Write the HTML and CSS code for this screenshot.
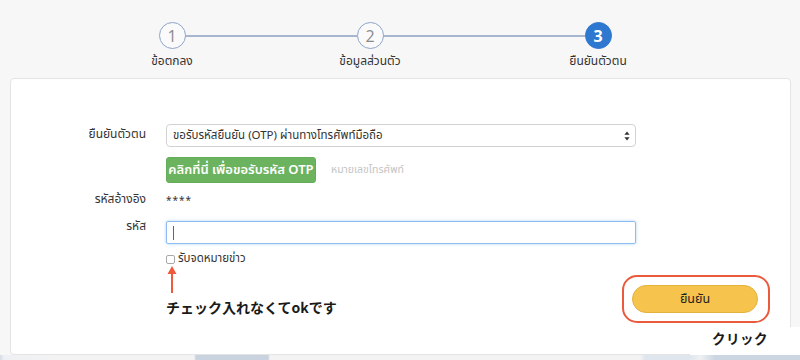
FILE: index.html
```html
<!DOCTYPE html>
<html lang="th">
<head>
<meta charset="utf-8">
<title>ยืนยันตัวตน</title>
<link rel="stylesheet" href="styles.css">
</head>
<body>
<div class="page">
  <div class="stepper">
    <div class="step">
      <div class="circle">1</div>
      <div class="step-label">ข้อตกลง</div>
    </div>
    <div class="connector c1"></div>
    <div class="step">
      <div class="circle">2</div>
      <div class="step-label">ข้อมูลส่วนตัว</div>
    </div>
    <div class="connector c2"></div>
    <div class="step">
      <div class="circle active">3</div>
      <div class="step-label">ยืนยันตัวตน</div>
    </div>
  </div>

  <div class="card">
    <div class="form-grid">
      <div class="label l-verify">ยืนยันตัวตน</div>
      <div class="control">
        <div class="select">
          <span>ขอรับรหัสยืนยัน (OTP) ผ่านทางโทรศัพท์มือถือ</span>
          <svg class="updown" width="6" height="10" viewBox="0 0 6 10"><path d="M3 0.5 L5.6 3.8 H0.4 Z M3 9.5 L5.6 6.2 H0.4 Z" fill="#333"/></svg>
        </div>
        <div class="otp-row">
          <button class="btn-green">คลิกที่นี่ เพื่อขอรับรหัส OTP</button>
          <span class="phone-hint">หมายเลขโทรศัพท์</span>
        </div>
      </div>

      <div class="label l-ref">รหัสอ้างอิง</div>
      <div class="control ref-value">****</div>

      <div class="label l-code">รหัส</div>
      <div class="control">
        <div class="input"><span class="caret"></span></div>
      </div>
    </div>

    <div class="bottom">
      <div class="left-col">
        <label class="check"><span class="box"></span><span>รับจดหมายข่าว</span></label>
        <svg class="arrow" width="12" height="28" viewBox="0 0 12 28"><path d="M6 27 V4" stroke="#ef5a3c" stroke-width="2"/><path d="M6 0 L10.5 8 H1.5 Z" fill="#ef5a3c"/></svg>
        <div class="note">チェック入れなくてokです</div>
      </div>
      <div class="ring">
        <button class="btn-yellow">ยืนยัน</button>
      </div>
    </div>
    <div class="click-note">クリック</div>
  </div>
  <div class="bg-strip"></div>
</div>
</body>
</html>
```

FILE: styles.css
```css
* { box-sizing: border-box; }
html, body { margin: 0; padding: 0; }
body {
  background: #f7f7f7;
  font-family: "Noto Sans Thai", "Noto Sans", "DejaVu Sans", sans-serif;
  color: #333;
  width: 800px;
  height: 360px;
  overflow: hidden;
}
.page { display: flex; flex-direction: column; }

.stepper {
  display: flex;
  align-items: flex-start;
  padding: 22px 0 0 132px;
  height: 78px;
}
.step {
  width: 80px;
  display: flex;
  flex-direction: column;
  align-items: center;
  position: relative;
  z-index: 1;
}
.circle {
  width: 27px;
  height: 27px;
  border-radius: 50%;
  border: 1.5px solid #8ea4c9;
  background: #fafafa;
  color: #8a8a8a;
  font-family: "Open Sans", sans-serif;
  font-size: 16px;
  display: flex;
  align-items: center;
  justify-content: center;
  line-height: 1;
}
.circle.active {
  background: #2f78d0;
  border-color: #2f78d0;
  color: #fff;
  font-weight: 700;
}
.step-label {
  margin-top: 3px;
  font-size: 12px;
  color: #333;
  white-space: nowrap;
}
.connector {
  height: 1.5px;
  background: #a7b6cf;
  margin-top: 13px;
  margin-left: -27px;
  margin-right: -27px;
}
.c1 { width: 172px; }
.c2 { width: 202px; }

.card {
  position: relative;
  margin-left: 10px;
  width: 781px;
  height: 277px;
  background: #fff;
  border: 1px solid #e4e4e4;
  border-radius: 4px;
  padding-top: 45px;
}

.form-grid {
  display: grid;
  grid-template-columns: 135px 470px;
  column-gap: 20px;
  align-items: start;
}
.label {
  text-align: right;
  font-size: 12px;
  color: #333;
}
.l-verify { padding-top: 1px; }
.l-ref { padding-top: 7px; }
.l-code { padding-top: 6px; }

.select {
  height: 23px;
  border: 1px solid #d2d2d2;
  border-radius: 4px;
  display: flex;
  align-items: center;
  justify-content: space-between;
  padding: 0 5px 0 6px;
  font-size: 11.5px;
  color: #333;
  background: #fff;
}
.updown { display: block; }
.otp-row {
  margin-top: 10px;
  display: flex;
  align-items: center;
  gap: 15px;
}
.btn-green {
  height: 26px;
  width: 150px;
  border: 1px solid #64ad58;
  background: #6cb35f;
  color: #fff;
  border-radius: 3px;
  font-family: inherit;
  font-size: 13px;
  font-weight: 600;
  padding: 0;
  white-space: nowrap;
}
.phone-hint {
  font-size: 10.5px;
  color: #c4c4c4;
}
.ref-value {
  padding-top: 8px;
  font-size: 10px;
  letter-spacing: 1px;
  color: #333;
  line-height: 20px;
}
.input {
  margin-top: 10px;
  height: 23px;
  border: 1px solid #8dbdf0;
  border-radius: 2px;
  box-shadow: 0 0 3px rgba(102, 170, 235, 0.55);
  display: flex;
  align-items: center;
  padding-left: 6px;
}
.caret {
  width: 1px;
  height: 14px;
  background: #666;
}

.bottom {
  display: flex;
  justify-content: space-between;
  align-items: flex-start;
  padding-left: 155px;
  padding-right: 20px;
  margin-top: 8px;
}
.left-col {
  display: flex;
  flex-direction: column;
  align-items: flex-start;
}
.check {
  display: flex;
  align-items: center;
  gap: 3px;
  font-size: 11.5px;
  line-height: 14px;
  color: #333;
}
.box {
  width: 9px;
  height: 9px;
  border: 1px solid #a9a9a9;
  border-radius: 2px;
  background: #fff;
}
.arrow {
  display: block;
  margin-left: 0px;
  margin-top: 0;
}
.note {
  margin-top: 3px;
  font-family: "Noto Sans CJK JP", sans-serif;
  font-weight: 700;
  font-size: 14px;
  line-height: 20px;
  color: #1a1a1a;
}
.ring {
  margin-top: 23px;
  border: 2px solid #ea5a3d;
  border-radius: 15px;
  padding: 8px 10px 8px 8px;
}
.btn-yellow {
  display: block;
  width: 126px;
  height: 28px;
  border-radius: 14px;
  border: 1px solid #e4b23f;
  background: #f6c34c;
  color: #222;
  font-family: inherit;
  font-size: 12.5px;
  font-weight: 400;
  padding: 0;
}
.click-note {
  position: absolute;
  right: -10px;
  top: 248px;
  width: 110px;
  height: 28px;
  background: #fff;
  font-family: "Noto Sans CJK JP", sans-serif;
  font-weight: 700;
  font-size: 13.5px;
  color: #1a1a1a;
  padding: 1px 0 0 22px;
  letter-spacing: 0.5px;
}
.bg-strip {
  height: 6px;
  background: linear-gradient(90deg,
    #d6dde6 0, #eef0f3 4px, #f3f3f3 60px, #f3f3f3 194px,
    #c9d3df 196px, #c9d3df 268px, #f3f3f3 270px, #f3f3f3 640px,
    #e0e6ee 645px, #e0e6ee 690px, #eef1f4 700px, #ccd6e2 715px, #ccd6e2 800px);
}
```
